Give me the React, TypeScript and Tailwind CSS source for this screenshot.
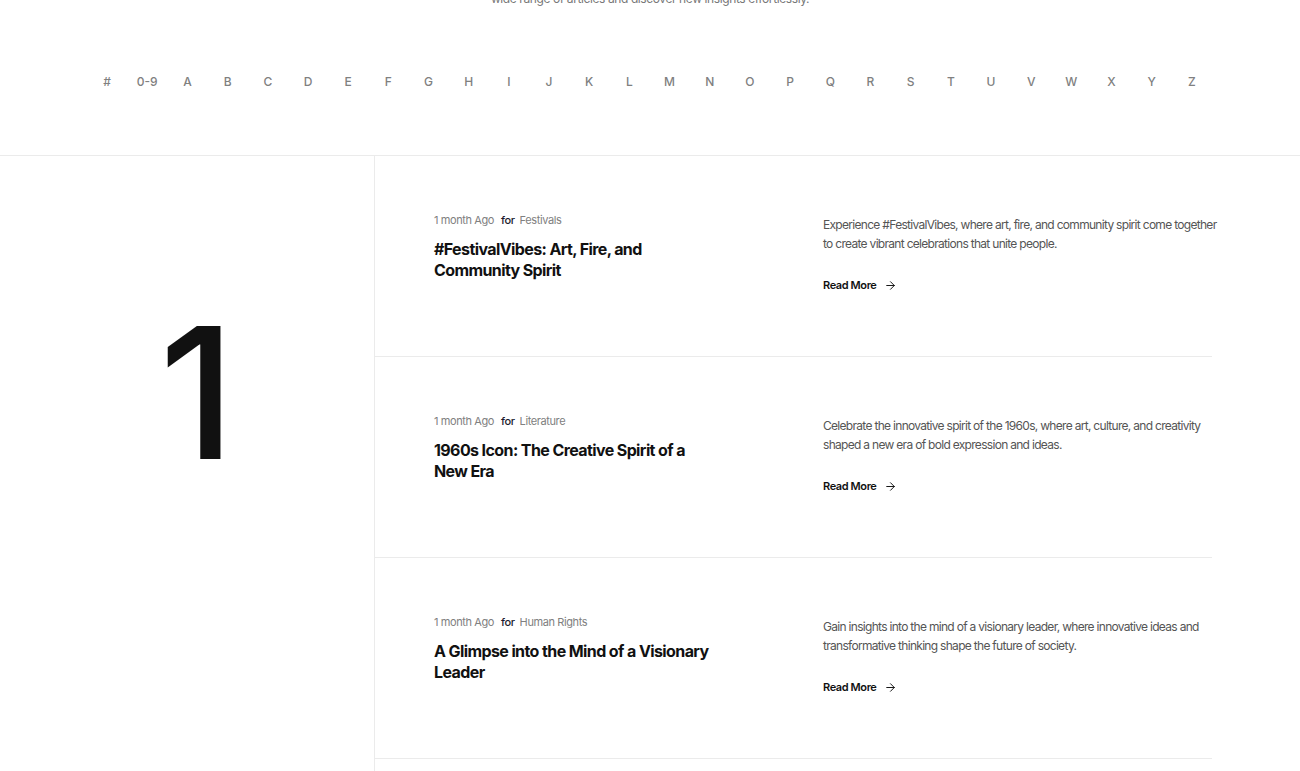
import { ArrowRight } from "lucide-react";

const letters = ["#", "0-9", ..."ABCDEFGHIJKLMNOPQRSTUVWXYZ".split("")];

const posts = [
  {
    time: "1 month Ago",
    category: "Festivals",
    title: "#FestivalVibes: Art, Fire, and Community Spirit",
    excerpt:
      "Experience #FestivalVibes, where art, fire, and community spirit come together to create vibrant celebrations that unite people.",
  },
  {
    time: "1 month Ago",
    category: "Literature",
    title: "1960s Icon: The Creative Spirit of a New Era",
    excerpt:
      "Celebrate the innovative spirit of the 1960s, where art, culture, and creativity shaped a new era of bold expression and ideas.",
  },
  {
    time: "1 month Ago",
    category: "Human Rights",
    title: "A Glimpse into the Mind of a Visionary Leader",
    excerpt:
      "Gain insights into the mind of a visionary leader, where innovative ideas and transformative thinking shape the future of society.",
  },
];

function PostRow({ post }: { post: (typeof posts)[number] }) {
  return (
    <div className="h-[201px] border-b border-[#ebebeb] pl-[59px] pt-[57px] grid grid-cols-2">
      <div>
        <div className="flex items-center text-[11px] leading-[14px] text-[#808080] tracking-[-0.4px]">
          <span>{post.time}</span>
          <span className="ml-[7px] mr-[5px] text-[#1a1a2e] font-medium">for</span>
          <span>{post.category}</span>
        </div>
        <h3 className="mt-[12px] max-w-[280px] text-[16px] leading-[21px] font-bold text-[#111] tracking-[-0.6px]">
          {post.title}
        </h3>
      </div>
      <div className="pt-[2px]">
        <p className="w-[400px] text-[12px] leading-[19px] text-[#555] tracking-[-0.7px]">{post.excerpt}</p>
        <a className="mt-[25px] flex items-center gap-[8px] text-[11px] leading-[14px] font-semibold text-[#111] tracking-[-0.4px]">
          Read More <ArrowRight size={13} strokeWidth={1.8} />
        </a>
      </div>
    </div>
  );
}

export default function App() {
  return (
    <div
      className="w-[1300px] min-h-[771px] bg-white overflow-hidden"
      style={{ fontFamily: "Inter, 'Noto Sans', sans-serif" }}
    >
      {/* intro paragraph is scrolled mostly out of view */}
      <p className="-mt-[25px] text-center text-[12px] leading-[16px] text-[#777] tracking-[-0.4px]">
        <span className="block">Dive into our curated collection of stories and ideas, explore a</span>
        <span className="block">wide range of articles and discover new insights effortlessly.</span>
      </p>

      <nav className="mt-[68px] pl-[87px] pr-[88px] grid grid-cols-[repeat(28,minmax(0,1fr))] text-[12px] leading-[14px] font-medium text-[#808080]">
        {letters.map((l) => (
          <span key={l} className="text-center whitespace-nowrap">
            {l}
          </span>
        ))}
      </nav>

      <div className="mt-[66px] border-t border-[#ebebeb] flex">
        <div className="w-[375px] shrink-0 border-r border-[#ebebeb] flex justify-center pt-[145px]">
          <span className="text-[183px] leading-[183px] font-medium text-[#111] pl-[16px] tracking-tight">1</span>
        </div>
        <div className="w-[837px]">
          {posts.map((p) => (
            <PostRow key={p.title} post={p} />
          ))}
          <div className="h-[40px]" />
        </div>
      </div>
    </div>
  );
}
